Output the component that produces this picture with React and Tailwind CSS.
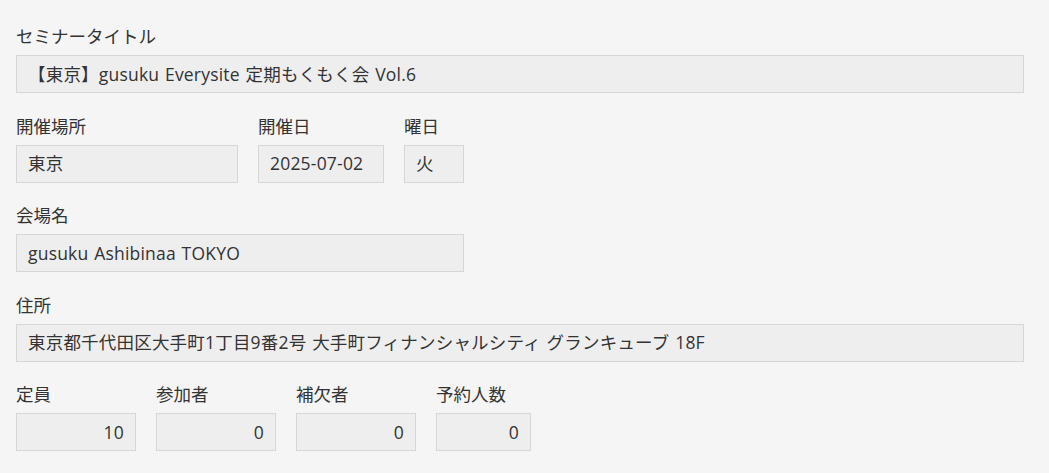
import React from 'react';

const font = { fontFamily: '"Open Sans", "Noto Sans CJK JP", sans-serif' };

const Field = ({ label, value, width, align = 'left' }) => (
    <div className={`flex flex-col ${width}`}>
        <div className="h-[22px] leading-[22px] text-[17.5px] text-[#333333] whitespace-nowrap">{label}</div>
        <div
            className={`mt-[8px] h-[38px] border border-[#d6d6d6] bg-[#eeeeee] px-[11px] flex items-center text-[17.5px] text-[#333333] whitespace-nowrap tracking-[0.2px] [word-spacing:1px]
                ${align === 'right' ? 'justify-end' : ''}`}
        >
            {value}
        </div>
    </div>
);

export default function App() {
    return (
        <div className="min-h-[473px] w-full bg-[#f5f5f5] pl-[16px] pt-[25px]" style={font}>
            <div className="w-[1008px] flex flex-col gap-[21.5px]">
                <Field label="セミナータイトル" value="【東京】gusuku Everysite 定期もくもく会 Vol.6" width="w-[1008px]" />

                <div className="flex gap-[20px]">
                    <Field label="開催場所" value="東京" width="w-[222px]" />
                    <Field label="開催日" value="2025-07-02" width="w-[126px]" />
                    <Field label="曜日" value="火" width="w-[60px]" />
                </div>

                <Field label="会場名" value="gusuku Ashibinaa TOKYO" width="w-[448px]" />

                <Field label="住所" value="東京都千代田区大手町1丁目9番2号 大手町フィナンシャルシティ グランキューブ 18F" width="w-[1008px]" />

                <div className="flex gap-[20px]">
                    <Field label="定員" value="10" width="w-[120px]" align="right" />
                    <Field label="参加者" value="0" width="w-[120px]" align="right" />
                    <Field label="補欠者" value="0" width="w-[120px]" align="right" />
                    <Field label="予約人数" value="0" width="w-[95px]" align="right" />
                </div>
            </div>
        </div>
    );
}
